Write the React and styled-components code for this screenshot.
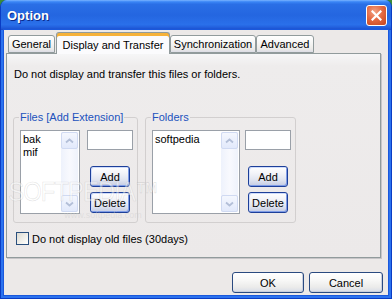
import React from 'react';
import styled, { createGlobalStyle } from 'styled-components';

const Global = createGlobalStyle`
  html, body { margin: 0; padding: 0; background: #3a8a3a; }
  body { font-family: "Liberation Sans", Arial, sans-serif; font-size: 11px; color: #000; }
  * { box-sizing: border-box; }
`;

const Window = styled.div`
  position: relative;
  width: 392px;
  height: 299px;
  display: flex;
  flex-direction: column;
  background: #2b72ee;
  border: 1px solid #0a3cc4;
  border-top: none;
  border-radius: 7px 7px 0 0;
  overflow: hidden;
`;

const TitleBar = styled.div`
  height: 30px;
  flex: 0 0 30px;
  display: flex;
  align-items: center;
  justify-content: space-between;
  padding: 0 4px 0 6px;
  background: linear-gradient(180deg, #7ab4ff 0%, #3a86f6 6%, #2a6fe6 14%, #2466e0 50%, #2a70ea 82%, #1f5ad9 94%, #1848c4 100%);
`;

const Title = styled.span`
  font-family: "Liberation Sans", Arial, sans-serif;
  font-weight: bold;
  font-size: 13px;
  color: #fff;
  text-shadow: 1px 1px 0 #0a2a8a;
  margin-top: 1px;
`;

const CloseBtn = styled.div`
  width: 21px;
  height: 21px;
  margin-top: 1px;
  border: 1px solid #fff;
  border-radius: 3px;
  display: flex;
  align-items: center;
  justify-content: center;
  background: radial-gradient(circle at 40% 30%, #f2a385 0%, #e56a43 45%, #c4441c 100%);
`;

const Client = styled.div`
  flex: 1;
  margin: 0 3px 3px 3px;
  background: #ece9e8;
  box-shadow: 0 0 0 1px #1a58dc;
  display: flex;
  flex-direction: column;
  padding: 2px 7px 0 2px;
`;

const TabRow = styled.div`
  display: flex;
  align-items: flex-end;
  height: 21px;
  padding-left: 2px;
  position: relative;
  z-index: 1;
`;

const Tab = styled.div`
  width: ${p => p.$w}px;
  height: ${p => (p.$active ? 22 : 18)}px;
  margin-right: ${p => p.$mr}px;
  margin-bottom: ${p => (p.$active ? -1 : 0)}px;
  display: flex;
  align-items: center;
  justify-content: center;
  border: 1px solid #919b9c;
  border-bottom: ${p => (p.$active ? 'none' : '1px solid #919b9c')};
  border-radius: 3px 3px 0 0;
  background: ${p =>
    p.$active
      ? '#fbfbfd'
      : 'linear-gradient(180deg, #ffffff 0%, #f7f7f6 40%, #ecebe8 80%, #dcdde6 100%)'};
  box-shadow: ${p => (p.$active ? 'inset 0 3px 0 #f6b23a, inset 0 2px 0 #e68b2c' : 'none')};
  padding-top: ${p => (p.$active ? 2 : 0)}px;
  white-space: nowrap;
`;

const Panel = styled.div`
  height: 205px;
  flex: 0 0 205px;
  border: 1px solid #919b9c;
  box-shadow: 1px 1px 0 #c7c5c8;
  background: linear-gradient(180deg, #f6f6f7 0px, #eeecec 12px, #ece9e9 100%);
  padding: 14px 6px 0 6px;
  display: flex;
  flex-direction: column;
`;

const Intro = styled.div`
  line-height: 13px;
  padding-left: 1px;
`;

const Groups = styled.div`
  display: flex;
  gap: 7px;
  margin-top: 30px;
`;

const Group = styled.fieldset`
  width: ${p => p.$w}px;
  margin: 0;
  border: 1px solid #d2cfcf;
  border-radius: 3px;
  padding: 6px 3px 8px 5px;
  min-width: 0;
`;

const Legend = styled.legend`
  color: #2152bd;
  padding: 0 1px;
  line-height: 13px;
`;

const GroupBody = styled.div`
  display: flex;
  gap: ${p => p.$gap}px;
  padding-left: 1px;
`;

const List = styled.div`
  width: ${p => p.$w}px;
  height: 84px;
  border: 1px solid #9aa0a8;
  background: #fff;
  display: flex;
`;

const Items = styled.div`
  flex: 1;
  padding: 2px 0 0 2px;
  line-height: 13px;
`;

const ScrollBar = styled.div`
  width: 17px;
  margin: 1px 1px 1px 0;
  display: flex;
  flex-direction: column;
  justify-content: space-between;
  background: linear-gradient(90deg, #eef2fc 0%, #f8f9fe 50%, #eef2fb 100%);
`;

const Arrow = styled.div`
  height: 17px;
  border: 1px solid #d0daf2;
  border-radius: 2px;
  background: linear-gradient(180deg, #f4f7fe 0%, #e2e9fb 100%);
  display: flex;
  align-items: center;
  justify-content: center;
`;

const Side = styled.div`
  width: 46px;
  display: flex;
  flex-direction: column;
  align-items: center;
`;

const TextBox = styled.div`
  width: 46px;
  height: 20px;
  border: 1px solid #9aa0a8;
  background: #fff;
`;

const Button = styled.div`
  width: ${p => p.$w}px;
  height: 21px;
  margin-top: ${p => p.$mt || 0}px;
  display: flex;
  align-items: center;
  justify-content: center;
  border: 1px solid ${p => (p.$blue ? '#1d3f99' : '#2a4a80')};
  border-radius: 3px;
  background: ${p =>
    p.$blue
      ? 'linear-gradient(180deg, #ffffff 0%, #f2f3f8 35%, #dfe3ef 70%, #c3cbe3 100%)'
      : 'linear-gradient(180deg, #ffffff 0%, #f7f7f6 40%, #ebebea 75%, #d7dce8 100%)'};
  box-shadow: ${p =>
    p.$blue ? 'inset 1px 1px 0 #cfdcfb, inset -1px -1px 0 #7f9ce6' : 'inset -1px -1px 0 #c9cfdd'};
`;

const CheckRow = styled.div`
  display: flex;
  align-items: center;
  gap: 3px;
  margin-top: 9px;
  padding-left: 3px;
`;

const CheckBox = styled.div`
  width: 13px;
  height: 13px;
  border: 1px solid #2a4f7d;
  background: linear-gradient(135deg, #dcdad2 0%, #f2f1ec 60%, #ffffff 100%);
`;

const Footer = styled.div`
  display: flex;
  justify-content: flex-end;
  gap: 5px;
  margin-top: 14px;
  margin-right: -2px;
`;

const Watermark = styled.div`
  position: absolute;
  left: 14px;
  top: 177px;
  width: 136px;
  pointer-events: none;
  display: flex;
  flex-direction: column;
  align-items: center;
`;

const WmBig = styled.div`
  font-family: "Liberation Sans", Arial, sans-serif;
  font-size: 27px;
  letter-spacing: -1px;
  transform: scaleX(0.88);
  color: rgba(255, 255, 255, 0.45);
  -webkit-text-stroke: 0.6px rgba(160, 160, 160, 0.3);
  line-height: 30px;
`;

const WmSmall = styled.div`
  font-size: 9px;
  margin-top: 3px;
  margin-left: 40px;
  color: rgba(205, 205, 205, 0.45);
  line-height: 10px;
`;

const Chevron = ({ down }) => (
  <svg width="9" height="6" viewBox="0 0 9 6">
    <path
      d={down ? 'M1 1.5 L4.5 4.5 L8 1.5' : 'M1 4.5 L4.5 1.5 L8 4.5'}
      fill="none"
      stroke="#b3bfd8"
      strokeWidth="1.8"
    />
  </svg>
);

const ListBox = ({ w, items }) => (
  <List $w={w}>
    <Items>
      {items.map(t => (
        <div key={t}>{t}</div>
      ))}
    </Items>
    <ScrollBar>
      <Arrow><Chevron /></Arrow>
      <Arrow><Chevron down /></Arrow>
    </ScrollBar>
  </List>
);

const SideControls = () => (
  <Side>
    <TextBox />
    <Button $blue $w={40} $mt={16}>Add</Button>
    <Button $blue $w={40} $mt={5}>Delete</Button>
  </Side>
);

const tabs = [
  { label: 'General', w: 47, mr: 1 },
  { label: 'Display and Transfer', w: 114, mr: 0, active: true },
  { label: 'Synchronization', w: 86, mr: 0 },
  { label: 'Advanced', w: 58, mr: 0 },
];

export default function App() {
  return (
    <>
      <Global />
      <Window>
        <TitleBar>
          <Title>Option</Title>
          <CloseBtn>
            <svg width="11" height="11" viewBox="0 0 11 11">
              <path d="M1.5 1.5 L9.5 9.5 M9.5 1.5 L1.5 9.5" stroke="#fff" strokeWidth="2.2" strokeLinecap="square" />
            </svg>
          </CloseBtn>
        </TitleBar>
        <Client>
          <TabRow>
            {tabs.map(t => (
              <Tab key={t.label} $w={t.w} $mr={t.mr} $active={t.active}>
                {t.label}
              </Tab>
            ))}
          </TabRow>
          <Panel>
            <Intro>Do not display and transfer this files or folders.</Intro>
            <Groups>
              <Group $w={125}>
                <Legend>Files [Add Extension]</Legend>
                <GroupBody $gap={7}>
                  <ListBox w={60} items={['bak', 'mif']} />
                  <SideControls />
                </GroupBody>
              </Group>
              <Group $w={151}>
                <Legend>Folders</Legend>
                <GroupBody $gap={5}>
                  <ListBox w={88} items={['softpedia']} />
                  <SideControls />
                </GroupBody>
              </Group>
            </Groups>
            <CheckRow>
              <CheckBox />
              <span>Do not display old files (30days)</span>
            </CheckRow>
          </Panel>
          <Footer>
            <Button $w={72}>OK</Button>
            <Button $w={74}>Cancel</Button>
          </Footer>
        </Client>
        <Watermark>
          <WmBig>SOFTPEDIA™</WmBig>
          <WmSmall>www.softpedia.com</WmSmall>
        </Watermark>
      </Window>
    </>
  );
}
